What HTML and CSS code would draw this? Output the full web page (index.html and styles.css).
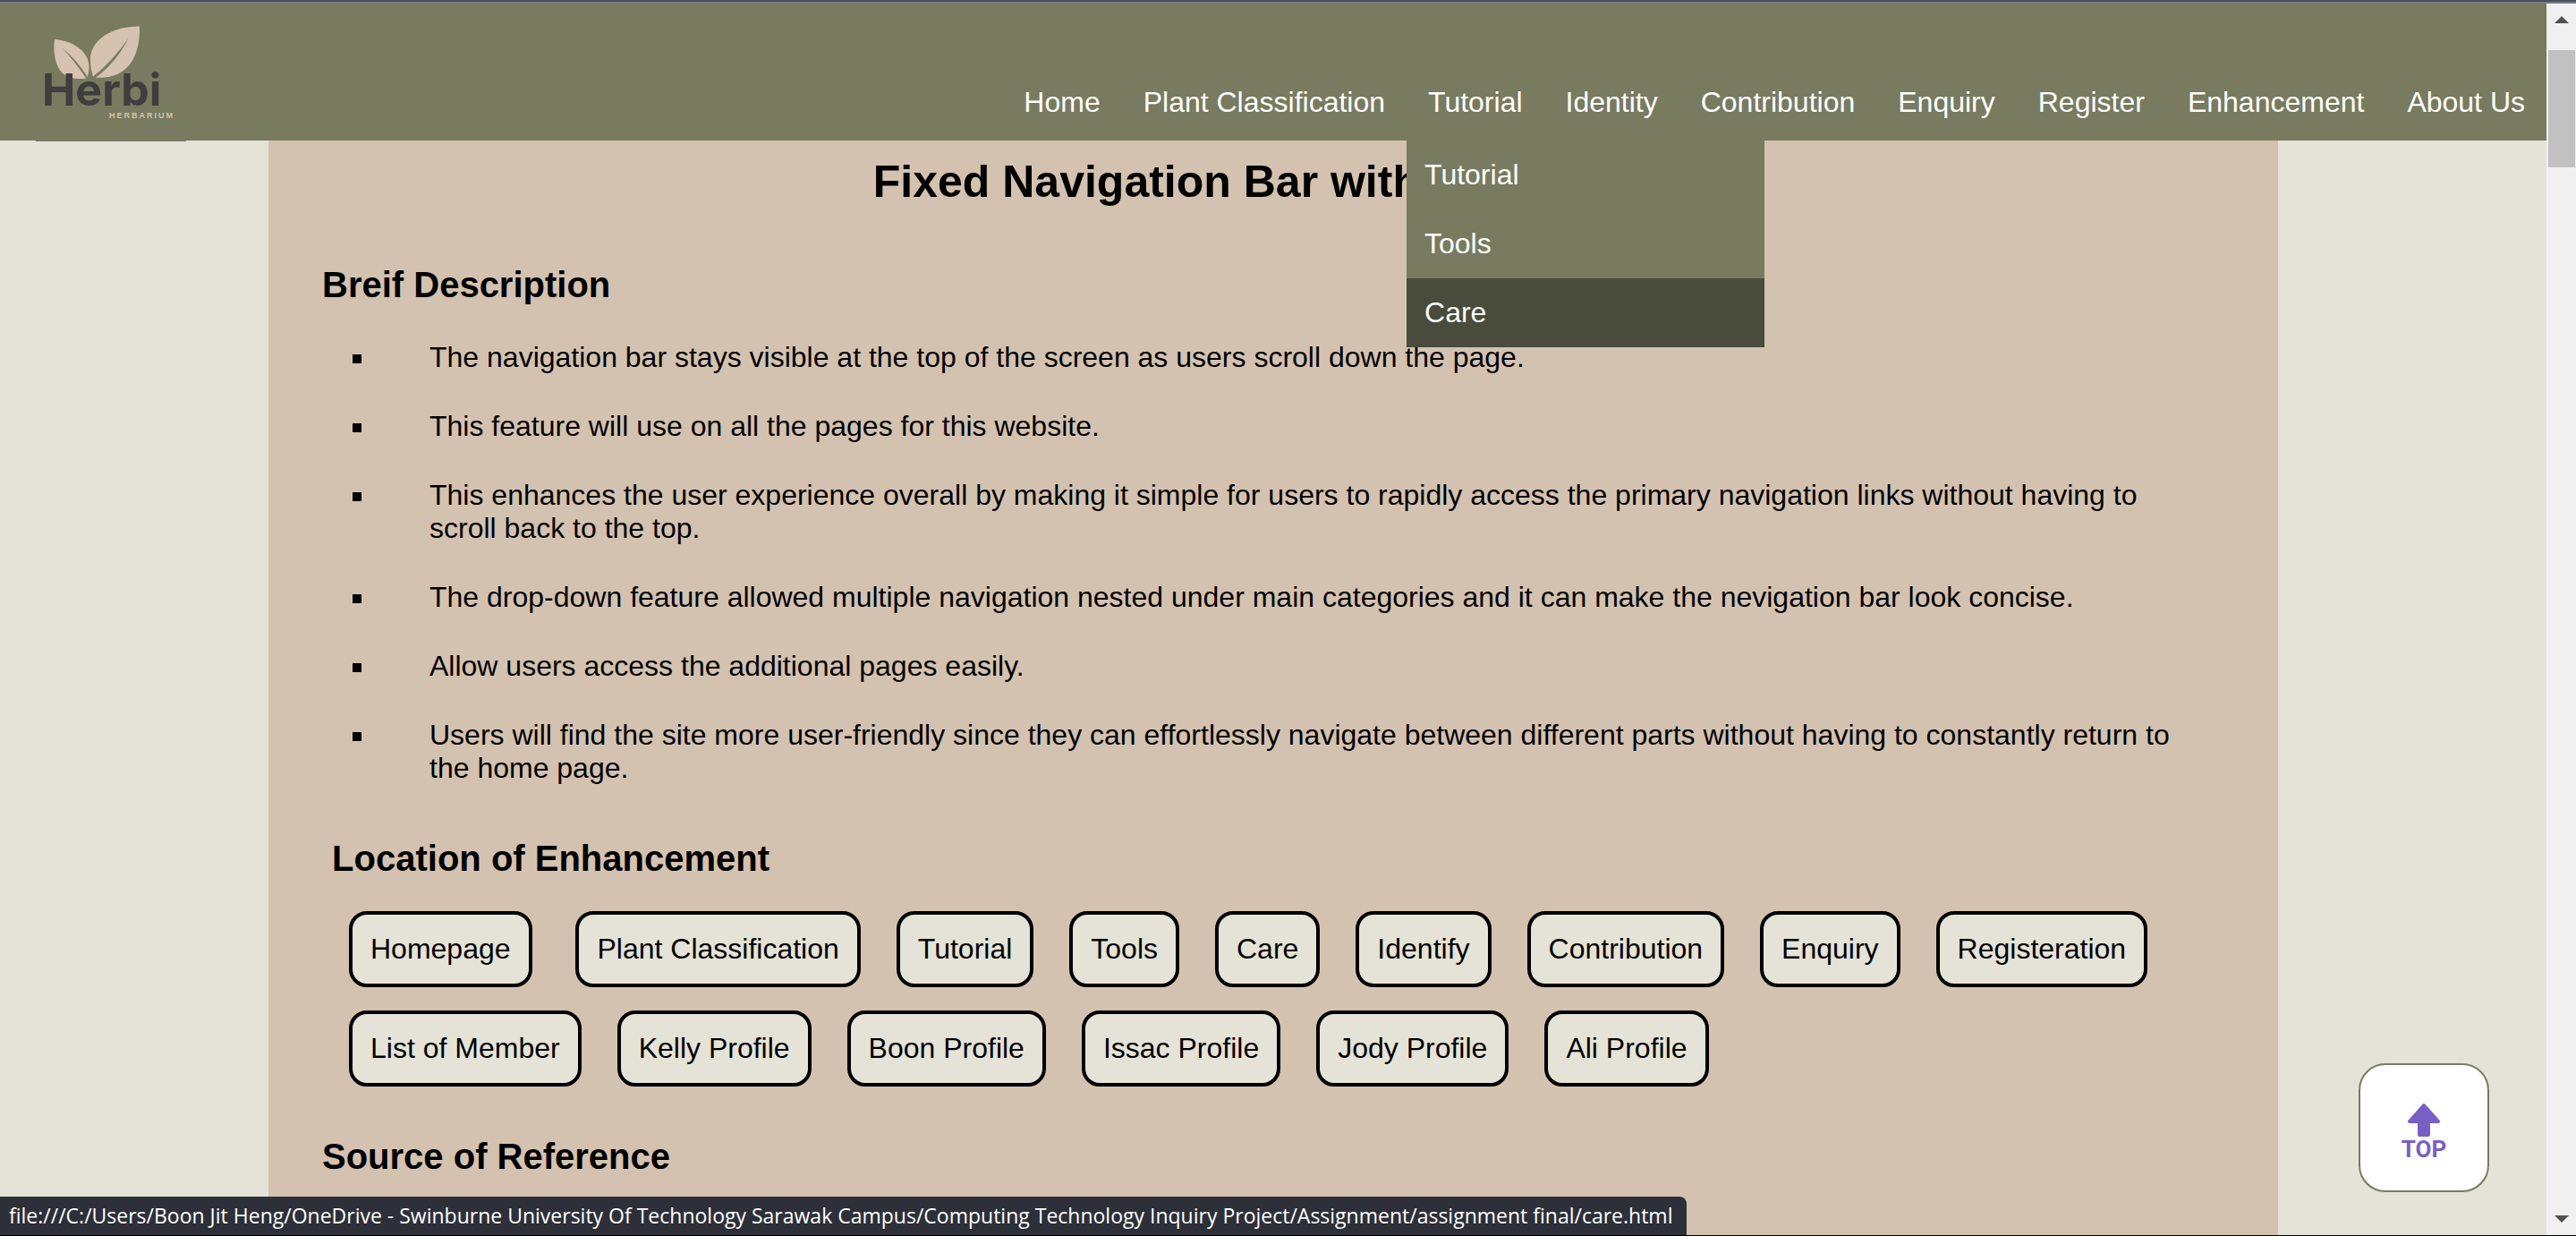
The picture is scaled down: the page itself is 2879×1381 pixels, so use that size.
FILE: index.html
```html
<!DOCTYPE html>
<html lang="en">
<head>
<meta charset="utf-8">
<title>Herbi - Enhancement</title>
<link rel="stylesheet" href="styles.css">
</head>
<body>
<div class="window">
  <div class="page">
    <header class="site-header">
      <a class="logo" href="#" aria-label="Herbi Herbarium">
        <svg width="168" height="154" viewBox="40 4 168 154">
          <g fill="#d5c2b1">
            <path d="M61 44C80 45 101 57 99.500 77L98 86Q84 65 70 54Q82 67 96.500 87.500Q80 90 70 82C62 74 59 60 61 44Z"/>
            <path d="M156 29.500C128 29 100 43 101 68Q101 77 104 85.500Q125 69 143.500 43Q128 72 107 86.500C139 89 157 68 156 29.500Z"/>
          </g>
          <text class="logo-name" x="47" y="118">Herbi</text>
          <text class="logo-sub" x="122" y="132">HERBARIUM</text>
        </svg>
      </a>
      <nav aria-label="Main">
        <ul class="menu">
          <li><a href="#">Home</a></li>
          <li><a href="#">Plant Classification</a></li>
          <li class="has-dropdown"><a href="#">Tutorial</a>
            <ul class="dropdown">
              <li><a href="#">Tutorial</a></li>
              <li><a href="#">Tools</a></li>
              <li><a class="active" href="#">Care</a></li>
            </ul>
          </li>
          <li><a href="#">Identity</a></li>
          <li><a href="#">Contribution</a></li>
          <li><a href="#">Enquiry</a></li>
          <li><a href="#">Register</a></li>
          <li><a href="#">Enhancement</a></li>
          <li><a href="#">About Us</a></li>
        </ul>
      </nav>
    </header>
    <main class="content">
      <h1>Fixed Navigation Bar with Drop-Down</h1>
      <h2>Breif Description</h2>
      <ul class="points">
        <li>The navigation bar stays visible at the top of the screen as users scroll down the page.</li>
        <li>This feature will use on all the pages for this website.</li>
        <li>This enhances the user experience overall by making it simple for users to rapidly access the primary navigation links without having to scroll back to the top.</li>
        <li>The drop-down feature allowed multiple navigation nested under main categories and it can make the nevigation bar look concise.</li>
        <li>Allow users access the additional pages easily.</li>
        <li>Users will find the site more user-friendly since they can effortlessly navigate between different parts without having to constantly return to the home page.</li>
      </ul>
      <h2>&nbsp;Location of Enhancement</h2>
      <ul class="chips">
        <li><a href="#">Homepage</a>&nbsp;</li>
        <li><a href="#">Plant Classification</a></li>
        <li><a href="#">Tutorial</a></li>
        <li><a href="#">Tools</a></li>
        <li><a href="#">Care</a></li>
        <li><a href="#">Identify</a></li>
        <li><a href="#">Contribution</a></li>
        <li><a href="#">Enquiry</a></li>
        <li><a href="#">Registeration</a></li>
        <li><a href="#">List of Member</a></li>
        <li><a href="#">Kelly Profile</a></li>
        <li><a href="#">Boon Profile</a></li>
        <li><a href="#">Issac Profile</a></li>
        <li><a href="#">Jody Profile</a></li>
        <li><a href="#">Ali Profile</a></li>
      </ul>
      <h2>Source of Reference</h2>
    </main>
  </div>
  <div class="scrollbar" aria-hidden="true">
    <svg class="arrow" width="16" height="8"><path d="M8 0L16 8H0Z"/></svg>
    <div class="thumb"></div>
    <svg class="arrow arrow-down" width="16" height="8"><path d="M0 0H16L8 8Z"/></svg>
  </div>
</div>
<a class="to-top" href="#" aria-label="Back to top">
  <svg width="70" height="70" viewBox="0 0 70 70">
    <path d="M35 4L51 22H40V37H30V22H19Z" fill="#775fc4" stroke="#775fc4" stroke-width="4" stroke-linejoin="round"/>
    <text class="to-top-label" x="35" y="62" text-anchor="middle">TOP</text>
  </svg>
</a>
<div class="status">file:///C:/Users/Boon Jit Heng/OneDrive - Swinburne University Of Technology Sarawak Campus/Computing Technology Inquiry Project/Assignment/assignment final/care.html</div>
</body>
</html>
```
FILE: styles.css
```css
* { box-sizing: border-box; }

body {
  margin: 0;
  height: 100vh;
  overflow: hidden;
  background: #e5e3d7;
  color: #000;
  font: 32px/37px "Liberation Sans", Arial, sans-serif;
}

ul { margin: 0; padding: 0; list-style: none; }
a { color: inherit; text-decoration: none; }

.window {
  display: flex;
  height: 100%;
  overflow: hidden;
  border-top: 2px solid #4a505c;
  border-bottom: 1px solid #000;
}

.page { flex: 1; min-width: 0; border-top: 2px solid #777a87; }

/* Header and menu */
.site-header {
  display: flex;
  justify-content: space-between;
  align-items: flex-end;
  height: 153px;
  padding-left: 40px;
  background: #787b5f;
  color: #fff;
}
.logo { display: block; height: 153px; }
.logo svg { display: block; background: #787b5f; }
.logo-name { font: bold 50px Inter, sans-serif; fill: #3e3e3e; }
.logo-sub { font: bold 9px "Liberation Sans", sans-serif; letter-spacing: 2px; fill: #d5c2b1; }

.menu { display: flex; }
.menu > li > a { display: block; padding: 20px 24px 24px; }
.has-dropdown { position: relative; }
.dropdown {
  position: absolute;
  top: 100%;
  left: 0;
  width: 400px;
  background: #787b5f;
}
.dropdown a { display: block; padding: 20px; }
.dropdown .active { background: #494b3c; }

/* Article */
.content {
  height: 100%;
  margin: 0 300px;
  padding: 17px 60px 0;
  background: #d4c2b0;
}
h1 {
  margin: 0 0 63px;
  font-size: 50px;
  line-height: 58px;
  text-align: center;
}
h2 { margin: 0 0 36px; font-size: 40px; line-height: 46px; }

.points {
  display: flex;
  flex-direction: column;
  gap: 40px;
  margin: 0 40px 0 60px;
  padding: 4px 0 59px;
  list-style: square;
}
.points li { padding-left: 60px; }

.chips {
  display: flex;
  flex-wrap: wrap;
  gap: 26px 40px;
  margin: 0 30px 55px;
}
.chips a {
  display: inline-block;
  padding: 20px;
  border: 4px solid #000;
  border-radius: 20px;
  background: #e5e3d7;
}

/* Window chrome */
.scrollbar {
  display: flex;
  flex-direction: column;
  align-items: center;
  width: 33px;
  padding: 14px 0;
  border-top: 2px solid #777a87;
  background: #f0f0f0;
}
.arrow { display: block; flex: none; fill: #505050; }
.arrow-down { margin-top: auto; }
.thumb { width: 30px; height: 131px; margin-top: 30px; background: #c1c1c1; }

.to-top {
  position: fixed;
  right: 97px;
  bottom: 49px;
  display: flex;
  justify-content: center;
  align-items: center;
  width: 146px;
  height: 144px;
  padding-top: 12px;
  border: 2px solid #787b5f;
  border-radius: 30px;
  background: #fff;
}
.to-top-label {
  font: bold 26px Roboto, sans-serif;
  fill: #775fc4;
}

.status {
  position: fixed;
  left: 0;
  bottom: 1px;
  padding: 0 16px 0 10px;
  border-top-right-radius: 8px;
  background: #2d3039;
  color: #fff;
  font: 23px/43px "Open Sans", "Noto Sans", sans-serif;
  white-space: nowrap;
}
```
